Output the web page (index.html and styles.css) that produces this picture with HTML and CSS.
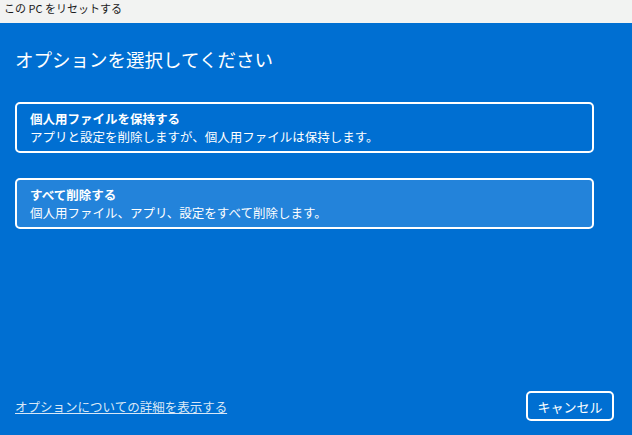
FILE: index.html
```html
<!DOCTYPE html>
<html lang="ja">
<head>
  <meta charset="UTF-8" />
  <title>この PC をリセットする</title>
  <link rel="stylesheet" href="styles.css">
</head>
<body>
  <div class="titlebar">この PC をリセットする</div>
  <div class="main">
    <h1>オプションを選択してください</h1>
    <div class="option">
      <div class="option-title">個人用ファイルを保持する</div>
      <div class="option-desc">アプリと設定を削除しますが、個人用ファイルは保持します。</div>
    </div>
    <div class="option selected">
      <div class="option-title">すべて削除する</div>
      <div class="option-desc">個人用ファイル、アプリ、設定をすべて削除します。</div>
    </div>
    <div class="footer">
      <a class="more" href="#">オプションについての詳細を表示する</a>
      <button class="cancel">キャンセル</button>
    </div>
  </div>
</body>
</html>
```

FILE: styles.css
```css
html, body {
  margin: 0;
  height: 100%;
}
* {
  box-sizing: border-box;
}
body {
  font-family: "Noto Sans CJK JP", "Noto Sans", sans-serif;
  background-color: #006fd2;
  color: #fff;
  display: flex;
  flex-direction: column;
}
.titlebar {
  height: 23px;
  line-height: 16px;
  padding-left: 4px;
  background-color: #f2f3f2;
  color: #1a1a1a;
  font-size: 11px;
}
.main {
  flex: 1;
  display: flex;
  flex-direction: column;
  padding: 22px 18px 14px 15px;
}
h1 {
  margin: 0 0 29px;
  font-size: 18.5px;
  font-weight: normal;
  line-height: 28px;
}
.option {
  width: 579px;
  border: 2px solid #fff;
  border-radius: 5px;
  padding: 6px 0 5px 13px;
  margin-bottom: 25px;
}
.option.selected {
  background-color: #2383da;
}
.option-title {
  font-size: 12.5px;
  font-weight: bold;
  line-height: 18px;
}
.option-desc {
  font-size: 12.5px;
  line-height: 18px;
}
.footer {
  margin-top: auto;
  display: flex;
  justify-content: space-between;
  align-items: center;
}
.more {
  color: #d8e7f6;
  font-size: 12.5px;
  text-decoration: underline;
}
.cancel {
  width: 88px;
  height: 30px;
  background: transparent;
  border: 2px solid #fff;
  border-radius: 5px;
  color: #fff;
  font-family: inherit;
  font-size: 13px;
  padding: 0;
}
```
